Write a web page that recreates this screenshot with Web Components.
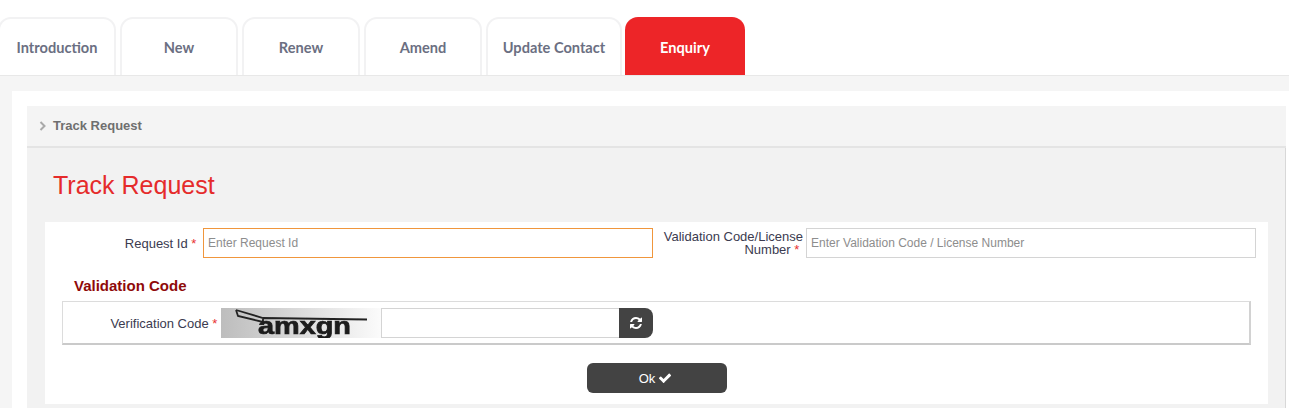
<!DOCTYPE html>
<html>
<head>
<meta charset="utf-8">
<style>
  html, body { margin: 0; height: 100%; overflow: hidden; background: #fff; }
  body { font-family: "Liberation Sans", Arial, sans-serif; }
</style>
</head>
<body>
<app-page>
  <tab-bar slot="tabs">
    <tab-item style="width:118px">Introduction</tab-item>
    <tab-item style="width:118px">New</tab-item>
    <tab-item style="width:118px">Renew</tab-item>
    <tab-item style="width:118px">Amend</tab-item>
    <tab-item style="width:136px">Update Contact</tab-item>
    <tab-item style="width:120px" active>Enquiry</tab-item>
  </tab-bar>
  <track-panel></track-panel>
</app-page>

<script>
  const ICONS = {
    refresh: 'M1639 1056q0 5-1 7-64 268-268 434.5t-478 166.5q-146 0-282.5-55t-243.5-157l-129 129q-19 19-45 19t-45-19-19-45v-448q0-26 19-45t45-19h448q26 0 45 19t19 45-19 45l-137 137q71 66 161 102t187 36q134 0 250-65t186-179q11-17 53-117 8-23 30-23h192q13 0 22.5 9.5t9.5 22.5zm25-800v448q0 26-19 45t-45 19h-448q-26 0-45-19t-19-45 19-45l138-138q-148-137-349-137-134 0-250 65t-186 179q-11 17-53 117-8 23-30 23h-199q-13 0-22.5-9.5t-9.5-22.5v-7q65-268 270-434.5t480-166.5q146 0 284 55.5t245 156.5l130-129q19-19 45-19t45 19 19 45z',
    check: 'M1671 566q0 40-28 68l-724 724-136 136q-28 28-68 28t-68-28l-136-136-362-362q-28-28-28-68t28-68l136-136q28-28 68-28t68 28l294 295 656-657q28-28 68-28t68 28l136 136q28 28 28 68z'
  };
  const icon = (name, size) =>
    `<svg width="${size}" height="${size}" viewBox="0 0 1792 1792" fill="currentColor"><path d="${ICONS[name]}"/></svg>`;

  class AppPage extends HTMLElement {
    constructor() {
      super();
      this.attachShadow({ mode: 'open' });
      this.shadowRoot.innerHTML = `
        <style>
          :host { display: flex; flex-direction: column; height: 408px; overflow: hidden; }
          .band { flex: 1; background: #f5f5f5; border-top: 1px solid #e8e8e8; padding: 15px 0 0 12px; min-height: 0; }
          .sheet { background: #fff; height: 100%; padding: 15px 3px 0 15px; box-sizing: border-box; }
        </style>
        <slot name="tabs"></slot>
        <div class="band"><div class="sheet"><slot></slot></div></div>
      `;
    }
  }

  class TabBar extends HTMLElement {
    constructor() {
      super();
      this.attachShadow({ mode: 'open' });
      this.shadowRoot.innerHTML = `
        <style>
          :host { display: flex; gap: 4px; padding-top: 17px; margin-left: -2px; height: 58px; }
        </style>
        <slot></slot>
      `;
    }
  }

  class TabItem extends HTMLElement {
    constructor() {
      super();
      this.attachShadow({ mode: 'open' });
      this.shadowRoot.innerHTML = `
        <style>
          :host {
            display: flex; align-items: center; justify-content: center; box-sizing: border-box;
            height: 58px; border: 2px solid #f2f2f3; border-bottom: 0; border-radius: 13px 13px 0 0;
            font: 700 14.6px Lato, sans-serif; color: #6b6f82; background: #fff;
          }
          :host([active]) { background: #ed2528; border-color: #ed2528; color: #fff; margin-left: -1px; }
        </style>
        <slot></slot>
      `;
    }
  }

  class TrackPanel extends HTMLElement {
    constructor() {
      super();
      this.attachShadow({ mode: 'open' });
      this.shadowRoot.innerHTML = `
        <style>
          :host { display: flex; flex-direction: column; height: 100%; font-family: "Liberation Sans", Arial, sans-serif; }
          .crumb {
            height: 40px; flex: none; display: flex; align-items: center; gap: 6px; padding-left: 12px;
            background: #f4f4f4; border-bottom: 2px solid #e4e4e4;
            font: 700 13px "Liberation Sans", Arial, sans-serif; color: #6f6f6f;
          }
          .crumb span { margin-top: -2px; }
          .body {
            flex: 1; background: #f2f2f2; border-right: 1px solid #d8d8d8; margin-right: 0;
            padding: 0 17px 0 18px; min-height: 0;
          }
          h1 { margin: 0; padding: 23px 0 0 8px; height: 51px; font: 400 25px/28px "Liberation Sans", Arial, sans-serif; color: #e52b2b; }
          .form { background: #fff; height: 182px; }
          .row {
            display: grid; grid-template-columns: 158px 450px 153px 450px; height: 30px; padding-top: 6px;
          }
          h2 { margin: 20px 0 0 29px; font: 700 15px/16px "Liberation Sans", Arial, sans-serif; color: #8f0a0a; height: 16px; }
          fieldset {
            margin: 7px 17px 0 17px; padding: 6px 0 0 0; height: 44px; box-sizing: border-box;
            border: 1px solid #dcdcdc; border-right: 2px solid #d2d2d2; border-bottom: 2px solid #cacaca;
            display: flex;
          }
          .ok-wrap { display: flex; justify-content: center; padding-top: 18px; }
        </style>
        <div class="crumb">
          <svg width="8" height="10" viewBox="0 0 8 10"><path d="M1.5 1 5.5 5 1.5 9" fill="none" stroke="#a9a9a9" stroke-width="2"/></svg>
          <span>Track Request</span>
        </div>
        <div class="body">
          <h1>Track Request</h1>
          <div class="form">
            <div class="row">
              <field-label>Request Id</field-label>
              <text-box placeholder="Enter Request Id" focused></text-box>
              <field-label>Validation Code/License<br>Number</field-label>
              <text-box placeholder="Enter Validation Code / License Number"></text-box>
            </div>
            <h2>Validation Code</h2>
            <fieldset>
              <field-label style="width:158px;flex:none;padding-right:0">Verification Code</field-label>
              <captcha-box></captcha-box>
            </fieldset>
            <div class="ok-wrap"><ok-button>Ok</ok-button></div>
          </div>
        </div>
      `;
    }
  }

  class FieldLabel extends HTMLElement {
    constructor() {
      super();
      this.attachShadow({ mode: 'open' });
      this.shadowRoot.innerHTML = `
        <style>
          :host {
            display: flex; align-items: center; justify-content: flex-end; text-align: right;
            height: 30px; box-sizing: border-box; padding-right: 3px;
            font: 400 13px/13px "Liberation Sans", Arial, sans-serif; color: #3b3b4f;
          }
          b { color: #e8322f; font-weight: 400; }
        </style>
        <span><slot></slot> <b>*</b>&nbsp;</span>
      `;
    }
  }

  class TextBox extends HTMLElement {
    constructor() {
      super();
      this.attachShadow({ mode: 'open' });
      const ph = this.getAttribute('placeholder') || '';
      this.shadowRoot.innerHTML = `
        <style>
          :host { display: block; height: 30px; }
          :host([focused]) input { border-color: #f0963c; }
          input {
            width: 100%; height: 30px; box-sizing: border-box; margin: 0; padding: 0 4px;
            border: 1px solid #d4d4d4; outline: 0; background: #fff;
            font: 400 12px "Liberation Sans", Arial, sans-serif; color: #333;
          }
          input::placeholder { color: #8d8d8d; opacity: 1; }
        </style>
        <input type="text" placeholder="${ph}">
      `;
    }
  }

  class CaptchaBox extends HTMLElement {
    constructor() {
      super();
      this.attachShadow({ mode: 'open' });
      this.shadowRoot.innerHTML = `
        <style>
          :host { display: flex; height: 30px; }
          .pic { display: block; }
          input { width: 238px; height: 30px; box-sizing: border-box; margin: 0; border: 1px solid #d4d4d4; border-right: 0; outline: 0; }
          button {
            width: 34px; height: 30px; padding: 0; border: 0; border-radius: 0 8px 8px 0;
            background: #434343; color: #fff; display: flex; align-items: center; justify-content: center;
          }
        </style>
        <svg class="pic" width="160" height="30" viewBox="0 0 160 30">
          <defs>
            <linearGradient id="g" x1="0" x2="1" y1="0" y2="0">
              <stop offset="0" stop-color="#bdbdbd"/>
              <stop offset=".35" stop-color="#d2d2d2"/>
              <stop offset="1" stop-color="#fbfbfb"/>
            </linearGradient>
            <filter id="soft"><feGaussianBlur stdDeviation=".6"/></filter>
          </defs>
          <rect width="160" height="30" fill="url(#g)"/>
          <g filter="url(#soft)">
            <path d="M15 2 42 10 146 11.5M15 2 17 8 42 14 42 10" fill="none" stroke="#222" stroke-width="1.8"/>
            <text x="37" y="26" textLength="93" lengthAdjust="spacingAndGlyphs"
              font-family="Liberation Sans, sans-serif" font-weight="700" font-size="23" fill="#1b1b1b" stroke="#1b1b1b" stroke-width=".7">amxgn</text>
          </g>
        </svg>
        <input type="text">
        <button>${icon('refresh', 14)}</button>
      `;
    }
  }

  class OkButton extends HTMLElement {
    constructor() {
      super();
      this.attachShadow({ mode: 'open' });
      this.shadowRoot.innerHTML = `
        <style>
          :host {
            display: flex; align-items: center; justify-content: center; gap: 3px;
            width: 140px; height: 30px; box-sizing: border-box; padding-right: 2px;
            border-radius: 6px; background: #434343; color: #fff;
            font: 400 13px "Liberation Sans", Arial, sans-serif;
          }
          svg { display: block; }
        </style>
        <slot></slot>${icon('check', 14)}
      `;
    }
  }

  customElements.define('app-page', AppPage);
  customElements.define('tab-bar', TabBar);
  customElements.define('tab-item', TabItem);
  customElements.define('track-panel', TrackPanel);
  customElements.define('field-label', FieldLabel);
  customElements.define('text-box', TextBox);
  customElements.define('captcha-box', CaptchaBox);
  customElements.define('ok-button', OkButton);
</script>
</body>
</html>
